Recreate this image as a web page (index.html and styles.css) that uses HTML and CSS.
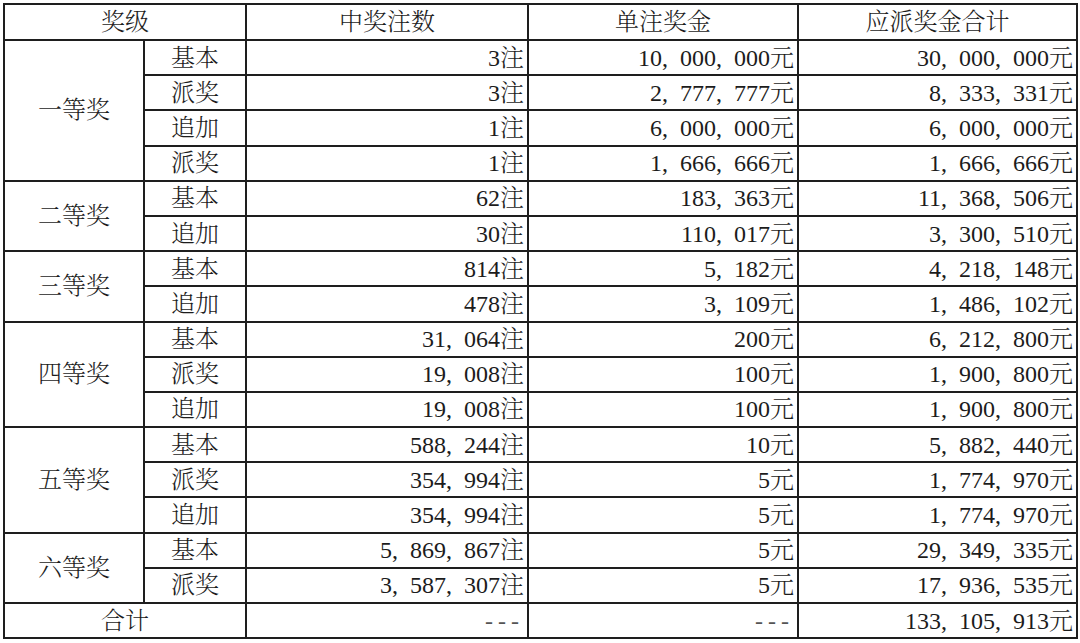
FILE: index.html
```html
<!DOCTYPE html>
<html lang="zh-CN">
<head>
<meta charset="utf-8">
<title>开奖详情</title>
<link rel="stylesheet" href="styles.css">
</head>
<body>
<div class="wrap">
<table class="prize">
  <colgroup>
    <col class="c1"><col class="c2"><col class="c3"><col class="c4"><col class="c5">
  </colgroup>
  <thead>
    <tr class="head"><th colspan="2">奖级</th><th>中奖注数</th><th>单注奖金</th><th>应派奖金合计</th></tr>
  </thead>
  <tbody>
    <tr><td class="lvl" rowspan="4">一等奖</td><td class="sub">基本</td><td class="num">3注</td><td class="num">10,&ensp;000,&ensp;000元</td><td class="num">30,&ensp;000,&ensp;000元</td></tr>
    <tr><td class="sub">派奖</td><td class="num">3注</td><td class="num">2,&ensp;777,&ensp;777元</td><td class="num">8,&ensp;333,&ensp;331元</td></tr>
    <tr><td class="sub">追加</td><td class="num">1注</td><td class="num">6,&ensp;000,&ensp;000元</td><td class="num">6,&ensp;000,&ensp;000元</td></tr>
    <tr><td class="sub">派奖</td><td class="num">1注</td><td class="num">1,&ensp;666,&ensp;666元</td><td class="num">1,&ensp;666,&ensp;666元</td></tr>

    <tr><td class="lvl" rowspan="2">二等奖</td><td class="sub">基本</td><td class="num">62注</td><td class="num">183,&ensp;363元</td><td class="num">11,&ensp;368,&ensp;506元</td></tr>
    <tr><td class="sub">追加</td><td class="num">30注</td><td class="num">110,&ensp;017元</td><td class="num">3,&ensp;300,&ensp;510元</td></tr>

    <tr><td class="lvl" rowspan="2">三等奖</td><td class="sub">基本</td><td class="num">814注</td><td class="num">5,&ensp;182元</td><td class="num">4,&ensp;218,&ensp;148元</td></tr>
    <tr><td class="sub">追加</td><td class="num">478注</td><td class="num">3,&ensp;109元</td><td class="num">1,&ensp;486,&ensp;102元</td></tr>

    <tr><td class="lvl" rowspan="3">四等奖</td><td class="sub">基本</td><td class="num">31,&ensp;064注</td><td class="num">200元</td><td class="num">6,&ensp;212,&ensp;800元</td></tr>
    <tr><td class="sub">派奖</td><td class="num">19,&ensp;008注</td><td class="num">100元</td><td class="num">1,&ensp;900,&ensp;800元</td></tr>
    <tr><td class="sub">追加</td><td class="num">19,&ensp;008注</td><td class="num">100元</td><td class="num">1,&ensp;900,&ensp;800元</td></tr>

    <tr><td class="lvl" rowspan="3">五等奖</td><td class="sub">基本</td><td class="num">588,&ensp;244注</td><td class="num">10元</td><td class="num">5,&ensp;882,&ensp;440元</td></tr>
    <tr><td class="sub">派奖</td><td class="num">354,&ensp;994注</td><td class="num">5元</td><td class="num">1,&ensp;774,&ensp;970元</td></tr>
    <tr><td class="sub">追加</td><td class="num">354,&ensp;994注</td><td class="num">5元</td><td class="num">1,&ensp;774,&ensp;970元</td></tr>

    <tr><td class="lvl" rowspan="2">六等奖</td><td class="sub">基本</td><td class="num">5,&ensp;869,&ensp;867注</td><td class="num">5元</td><td class="num">29,&ensp;349,&ensp;335元</td></tr>
    <tr><td class="sub">派奖</td><td class="num">3,&ensp;587,&ensp;307注</td><td class="num">5元</td><td class="num">17,&ensp;936,&ensp;535元</td></tr>

    <tr><td class="lvl" colspan="2">合计</td><td class="num dash">---</td><td class="num dash">---</td><td class="num">133,&ensp;105,&ensp;913元</td></tr>
  </tbody>
</table>
</div>
</body>
</html>
```

FILE: styles.css
```css
html, body {
  margin: 0;
  padding: 0;
  background: #ffffff;
}

.wrap {
  padding: 3px 0 0 3px;
}

.prize {
  border-collapse: collapse;
  table-layout: fixed;
  width: 1073px;
  font-family: "Liberation Serif", "Noto Serif CJK SC", "Noto Sans CJK SC", serif;
  font-size: 24px;
  font-weight: 300;
  color: #1c1c1c;
}

.c1 { width: 140px; }
.c2 { width: 102px; }
.c3 { width: 282px; }
.c4 { width: 270px; }
.c5 { width: 279px; }

.prize th,
.prize td {
  border: 2px solid #1e1e1e;
  padding: 0 3px;
  height: 33.2px;
  line-height: 26px;
  white-space: nowrap;
  overflow: hidden;
  vertical-align: middle;
}

.prize th {
  font-weight: 300;
  text-align: center;
}

.head th {
  height: 34px;
}

.lvl,
.sub {
  text-align: center;
}

.num {
  text-align: right;
  padding-right: 2px;
}

.dash {
  letter-spacing: 5px;
  color: #555;
}
```
